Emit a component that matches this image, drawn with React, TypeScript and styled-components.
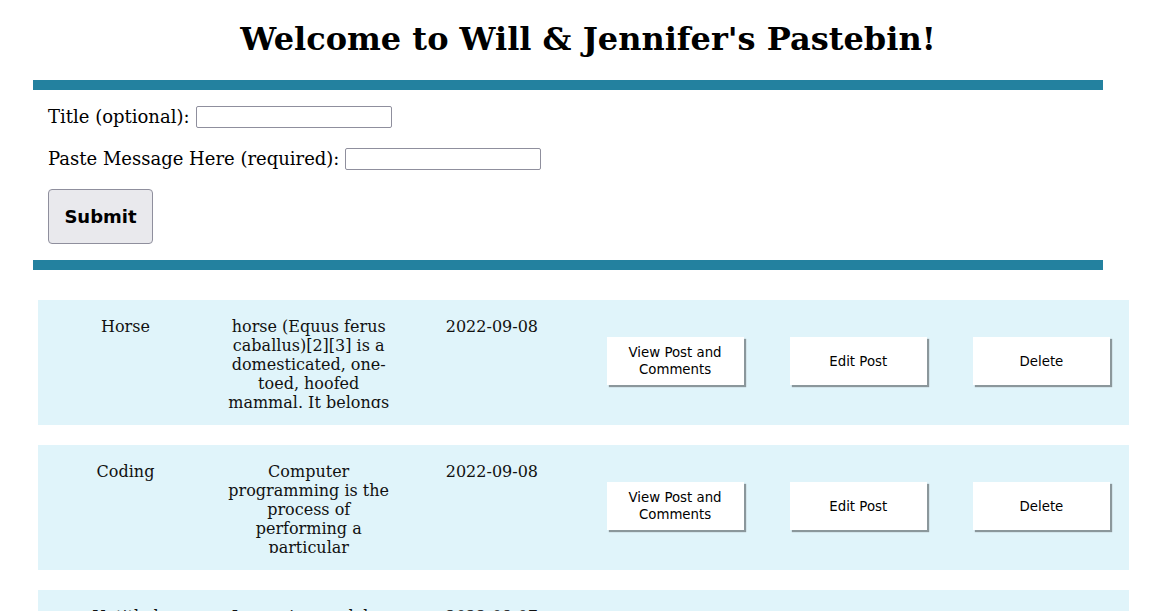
import React from "react";
import styled, { createGlobalStyle } from "styled-components";

const GlobalStyle = createGlobalStyle`
  html, body { background: #ffffff; }
  body {
    margin: 8px;
    font-family: "DejaVu Serif", serif;
    font-size: 16px;
    color: #000000;
  }
  * { box-sizing: border-box; }
`;

const Heading = styled.h1`
  margin: 12.44px 0 21.44px 0;
  font-size: 32px;
  font-weight: bold;
  text-align: center;
  font-family: "DejaVu Serif", serif;
`;

const Form = styled.form`
  margin: 0 65px 0 25px;
  border-top: 10px solid #23819f;
  border-bottom: 10px solid #23819f;
  padding: 16px 15px 16px 15px;
  display: flex;
  flex-direction: column;
  align-items: flex-start;
`;

const Field = styled.div<{ $mb: number }>`
  display: flex;
  align-items: center;
  gap: 6px;
  height: 22px;
  margin-bottom: ${(p) => p.$mb}px;
`;

const Label = styled.label`
  font-size: 18px;
  font-family: "DejaVu Serif", serif;
  line-height: 22px;
`;

const TextInput = styled.input`
  width: 196px;
  height: 22px;
  border: 1px solid #8f8f9d;
  border-radius: 2px;
  padding: 1px 2px;
  background: #ffffff;
  font-family: "DejaVu Sans", sans-serif;
  font-size: 13px;
`;

const SubmitButton = styled.button`
  width: 105px;
  height: 55px;
  padding: 0 15px;
  background: #e9e9ed;
  border: 1px solid #8f8f9d;
  border-radius: 4px;
  font-family: "DejaVu Sans", sans-serif;
  font-weight: bold;
  font-size: 18px;
  color: #000000;
`;

const List = styled.div`
  padding: 30px 39px 0 30px;
  display: flex;
  flex-direction: column;
  gap: 20px;
`;

const Row = styled.div`
  height: 125px;
  background: #e0f4fa;
  padding: 17px 5px 18px 5px;
  display: grid;
  grid-template-columns: repeat(6, 165px);
  justify-content: space-between;
`;

const Cell = styled.div`
  text-align: center;
  font-family: "DejaVu Serif", serif;
  font-size: 16px;
  line-height: normal;
  color: #111111;
`;

const Description = styled(Cell)`
  height: 91px;
  overflow: hidden;
`;

const ButtonCell = styled.div`
  display: flex;
  justify-content: center;
  align-items: center;
  padding-bottom: 2px;
`;

const ActionButton = styled.button`
  width: 137px;
  height: 48px;
  border: none;
  background: #ffffff;
  box-shadow: 2px 2px 1px rgba(0, 0, 0, 0.38);
  font-family: "DejaVu Sans", sans-serif;
  font-size: 13.33px;
  line-height: 17px;
  color: #000000;
  padding: 0 10px;
`;

type Post = { title: string; body: string; date: string };

const posts: Post[] = [
  {
    title: "Horse",
    body:
      "horse (Equus ferus caballus)[2][3] is a domesticated, one-toed, hoofed mammal. It belongs to the taxonomic family Equidae and is one of two extant subspecies of Equus ferus.",
    date: "2022-09-08",
  },
  {
    title: "Coding",
    body:
      "Computer programming is the process of performing a particular computation, usually by designing and building an executable computer program.",
    date: "2022-09-08",
  },
  {
    title: "Untitled",
    body:
      "Lorem ipsum dolor sit amet, consectetur adipiscing elit, sed do eiusmod tempor incididunt.",
    date: "2022-09-07",
  },
];

export default function App() {
  return (
    <>
      <GlobalStyle />
      <Heading>Welcome to Will &amp; Jennifer's Pastebin!</Heading>
      <Form onSubmit={(e) => e.preventDefault()}>
        <Field $mb={20}>
          <Label>Title (optional):</Label>
          <TextInput type="text" />
        </Field>
        <Field $mb={19}>
          <Label>Paste Message Here (required):</Label>
          <TextInput type="text" />
        </Field>
        <SubmitButton type="submit">Submit</SubmitButton>
      </Form>
      <List>
        {posts.map((p, i) => (
          <Row key={i}>
            <Cell>{p.title}</Cell>
            <Description>{p.body}</Description>
            <Cell>{p.date}</Cell>
            <ButtonCell>
              <ActionButton>View Post and Comments</ActionButton>
            </ButtonCell>
            <ButtonCell>
              <ActionButton>Edit Post</ActionButton>
            </ButtonCell>
            <ButtonCell>
              <ActionButton>Delete</ActionButton>
            </ButtonCell>
          </Row>
        ))}
      </List>
    </>
  );
}
